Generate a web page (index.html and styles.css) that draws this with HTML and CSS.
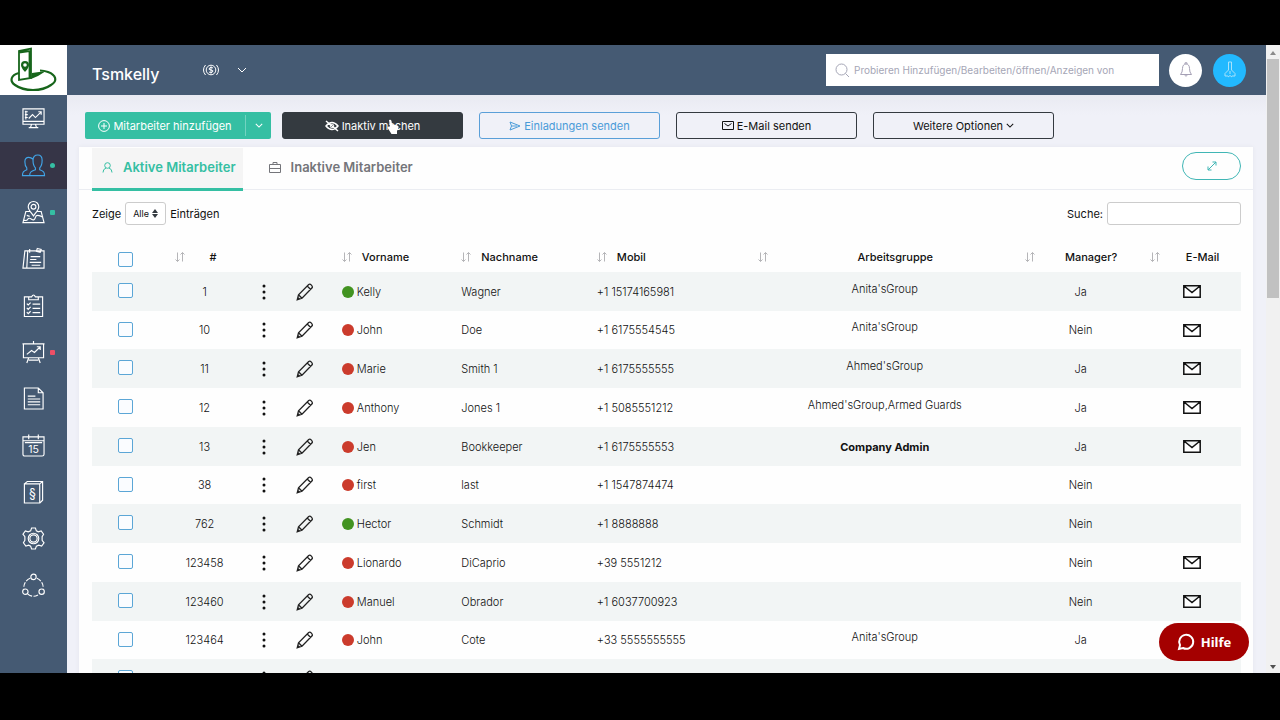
FILE: index.html
```html
<!DOCTYPE html>
<html lang="de">
<head>
<meta charset="utf-8">
<title>Tsmkelly – Mitarbeiter</title>
<link rel="stylesheet" href="styles.css">
</head>
<body>
<svg class="sprite" aria-hidden="true">
  <symbol id="sort" viewBox="0 0 10 10"><path d="M2.5 .5v9M.5 7.5l2 2 2-2M7.500 9.500v-9M5.500 2.500l2-2 2 2"/></symbol>
  <symbol id="dots" viewBox="0 0 4 16"><circle cx="2" cy="2" r="1.500"/><circle cx="2" cy="8" r="1.500"/><circle cx="2" cy="14" r="1.500"/></symbol>
  <symbol id="pencil" viewBox="0 0 18 18"><path d="M1.200 16.800l1.300-5L12.700 1.500q1.200-.9 2.700.6t.7 2.700L6 15.300zM2.500 11.800L6 15.300M11.200 3l3.500 3.500M1.500 16.500l.5-2 1.500 1.500z"/></symbol>
  <symbol id="mail" viewBox="0 0 18 13"><path d="M.8.8h16.400v11.400H.8zM1 1l8 6.500L17 1"/></symbol>
  <symbol id="chev" viewBox="0 0 10 6"><path d="M1 1l4 4 4-4"/></symbol>
</svg>
<div class="app">
  <aside class="sidebar">
    <a class="logo" href="#" aria-label="Startseite">
      <svg width="50" height="46" viewBox="0 0 50 46" fill="none" stroke="#17651b">
        <path stroke-width="2.200" d="M10 26C2 28 0 34 6 38q7 5 18 5t18-5c7-4 5-10-3-13q-4-1.500-8-1.500"/>
        <path stroke-width="1.800" d="M10 33V4l12-2.500V31zM20.500 31V4L10 5.500"/>
        <path fill="#17651b" stroke="none" d="M23 26l14-2-8 5-7 3zM16 14a4 4 0 0 1 4 4c0 3-4 7-4 7s-4-4-4-7a4 4 0 0 1 4-4z"/>
        <circle cx="16" cy="18" r="1.800" fill="#fff" stroke="none"/>
      </svg>
    </a>
    <nav class="menu">
      <a href="#" aria-label="Dashboard"><svg viewBox="0 0 24 24"><path d="M1 2h22v16H1zM1 15h22M10 18l-1 3M14 18l1 3M7 21.500h10M4 4v9M3 5h3M3 8h3M3 11h3M7 12l4-4 3 3 6-6M17 5h3v3"/></svg></a>
      <a href="#" class="current" aria-label="Mitarbeiter"><svg viewBox="0 0 24 24"><path d="M8 22.500h15.500c0-4-1-4.500-5-6v-2c2-2 2.500-5 2.500-8 0-4-2-5.500-4.500-5.500S11.500 2.500 11.500 6.500c0 3 .5 6 2.500 8v2c-4 1.500-6 2-6 6zM8 22.500H.5c0-4 1-4.500 4.500-6v-2c-2-2-2-4-2-6.500C3 5 4.500 3.500 7 3.500q2.500 0 4.500 2"/></svg><i class="dot green"></i></a>
      <a href="#" aria-label="Karte"><svg viewBox="0 0 24 24"><path d="M8 11H4L1 22.500h22L20 11h-4M12 15.500c-2-3-5.500-6-5.500-9.500a5.500 5.500 0 0 1 11 0c0 3.500-3.500 6.500-5.500 9.500zM2 20q3 1 4-1t4 0 4-2 8 0M5 15l3 1"/><circle cx="12" cy="6" r="2.500"/></svg><i class="dot green square"></i></a>
      <a href="#" aria-label="Notizen"><svg viewBox="0 0 24 24"><path d="M3 4L1 22h22V4zM6 4L5 22M8 2v4M11 4h5M16 1.500l4 1-1 3-4-1zM9 10h10M8.500 13H15M8 16h12M10 19h9"/></svg></a>
      <a href="#" aria-label="Aufgaben"><svg viewBox="0 0 24 24"><path d="M8 3H2.500v20.500h19V3H16M7 6h10V3h-3q-2-4-4 0H7zM5 10l1.500 1.500L9 9M11 10.500h8M5 14.500L6.500 16 9 13.500M11 15h8M5 19l1.500 1.500L9 18M11 19.500h8"/></svg></a>
      <a href="#" aria-label="Berichte"><svg viewBox="0 0 24 24"><path d="M.5 3h23M1.500 3v14.500h21V3M12 0v3M7 17.500L5 23M17 17.500l2 5.500M7 20h10M5 14l5-4 3 2 6-6M15.500 6H19v3.500"/></svg><i class="dot red square"></i></a>
      <a href="#" aria-label="Dokumente"><svg viewBox="0 0 24 24"><path d="M2.500 1H17l5 5v17h-19.500zM17 1v5h5M6 9.500h8M6 12.500h13M6 15.500h13M6 18.500h13"/></svg></a>
      <a href="#" aria-label="Kalender"><svg viewBox="0 0 24 24"><path d="M1 3h22v18q0 2-2 2H3q-2 0-2-2zM1 7h22M3 9h18M7 .5v5M17 .5v5"/><text x="12" y="20" text-anchor="middle">15</text></svg></a>
      <a href="#" aria-label="Richtlinien"><svg viewBox="0 0 24 24"><path d="M2.500 3h16v20h-16zM2.500 3l3-2.500h16V20l-3 3M18.500 3l3-2.500"/><text class="section" x="11" y="17.500" text-anchor="middle">§</text></svg></a>
      <a href="#" aria-label="Einstellungen"><svg viewBox="0 0 24 24"><path d="M10 1h4l1 3 2 1 3-1 2.500 3.500L21 10v4l2 2.500-2.500 3.500-3-1-2.500 1-1 3h-4l-1-3-2-1-3 1L1.500 16.500 3 14v-4L1 7.500 3.500 4l3 1L9 4z"/><circle cx="12" cy="12" r="5.500"/><circle cx="12" cy="12" r="3.800"/></svg></a>
      <a href="#" aria-label="Netzwerk"><svg viewBox="0 0 24 24"><circle cx="12" cy="3" r="2.800"/><circle cx="3.500" cy="18.500" r="2.800"/><circle cx="20.500" cy="18.500" r="2.800"/><path d="M8.500 4.500A10 10 0 0 0 2 15M15.500 4.500A10 10 0 0 1 22 15M6 21q6 4.500 12 0" stroke-dasharray="5 1.500"/></svg></a>
    </nav>
  </aside>
  <div class="page">
    <header class="topbar">
      <h1>Tsmkelly</h1>
      <button class="coin" aria-label="Währung"><svg width="16" height="14" viewBox="0 0 16 14" class="line"><circle cx="8" cy="7" r="4.800"/><path d="M2.500 2a8 8 0 0 0 0 10M13.500 2a8 8 0 0 1 0 10M10 5Q8 3.500 6.500 5T8 7t1.500 2T6 9M8 3.500v7"/></svg></button>
      <button class="plain" aria-label="Menü öffnen"><svg width="10" height="6" class="line"><use href="#chev"/></svg></button>
      <label class="search"><svg width="15" height="15" viewBox="0 0 15 15" class="line"><circle cx="6.500" cy="6.500" r="5.500"/><path d="M10.500 10.500l3.500 3.500"/></svg><input type="search" aria-label="Global suchen" placeholder="Probieren Hinzufügen/Bearbeiten/öffnen/Anzeigen von"></label>
      <button class="round bell" aria-label="Benachrichtigungen"><svg width="14" height="16" viewBox="0 0 14 16" class="line"><path d="M1.500 12.500q2-2 2-6C3.500 3.500 5 2 7 2s3.500 1.500 3.500 4.500q0 4 2 6zM6 2V.8h2V2M5.500 13q1.500 2.500 3 0"/></svg></button>
      <button class="round user" aria-label="Profil"><svg width="12" height="18" viewBox="0 0 12 18" class="line"><path d="M4.500 1v8L1 12.500V15h3M7.500 1v8l3.500 3.500V15H8M6 10v3M4 16l2-1.500L8 16M4.500 1h3"/></svg></button>
    </header>
    <main class="content">
      <div class="actions">
        <div class="split">
          <button class="add"><svg width="12" height="12" viewBox="0 0 12 12" class="line"><circle cx="6" cy="6" r="5.400"/><path d="M6 3v6M3 6h6"/></svg>Mitarbeiter hinzufügen</button>
          <button class="more" aria-label="Weitere Aktionen"><svg width="8" height="5" class="line strong" viewBox="0 0 10 6"><use href="#chev" width="10" height="6"/></svg></button>
        </div>
        <div class="buttons">
          <button class="btn dark"><svg width="14" height="12" viewBox="0 0 14 12" class="line"><path stroke-width="1.500" d="M1 6q6-7 12 0-6 7-12 0zM1 1l12 10"/><circle cx="7" cy="6" r="1.800"/></svg>Inaktiv machen
            <svg class="pointer" width="12" height="16" viewBox="0 0 12 16"><path fill="#fff" d="M2 1q2-1 2.500 1L5 5l5.500 1.500Q12 7 11.500 9L10 12v3H4.500L1 9.500Q0 8 1.500 7.500L3 8z"/></svg></button>
          <button class="btn blue"><svg width="12" height="10" viewBox="0 0 12 10" class="line"><path d="M1 1l10 4L1 9l1.500-4zM2.500 5H8"/></svg>Einladungen senden</button>
          <button class="btn"><svg width="12" height="9" viewBox="0 0 12 9" class="line"><path d="M.5.500h11v8H.5zM2.500 2.500L6 5l3.500-2.500"/></svg>E-Mail senden</button>
          <button class="btn">Weitere Optionen<svg width="8" height="5" class="line strong" viewBox="0 0 10 6"><use href="#chev" width="10" height="6"/></svg></button>
        </div>
      </div>
      <section class="card">
        <div class="tabs">
          <button class="tab active"><svg width="11" height="11" viewBox="0 0 11 11" class="line"><circle cx="5.500" cy="3.500" r="2.800"/><path d="M1 10.500Q1 7 4 6M10 10.500Q10 7 7 6"/></svg>Aktive Mitarbeiter</button>
          <button class="tab"><svg width="12" height="11" viewBox="0 0 12 11" class="line"><path d="M.5 2.500h11v8H.5zM4 2.500v-2h4v2M.5 6.500h11"/></svg>Inaktive Mitarbeiter</button>
          <button class="expand" aria-label="Vergrößern"><svg width="10" height="10" viewBox="0 0 10 10" class="line"><path d="M1 9l8-8M5.500 1H9v3.500M1 5.500V9h3.500"/></svg></button>
        </div>
        <div class="filters">
          <label for="count">Zeige</label>
          <span class="select"><select id="count"><option>Alle</option></select><svg width="6" height="9" viewBox="0 0 6 9"><path fill="#343a40" d="M0 4l3-4 3 4zM0 5l3 4 3-4z"/></svg></span>
          <span>Einträgen</span>
          <label class="find" for="find">Suche:</label><input id="find" type="text">
        </div>
        <table>
          <colgroup><col class="c-check"><col class="c-id"><col class="c-dots"><col class="c-edit"><col class="c-first"><col class="c-last"><col class="c-phone"><col class="c-group"><col class="c-mgr"><col class="c-mail"></colgroup>
          <thead><tr>
            <th><input type="checkbox" aria-label="Alle auswählen"></th>
            <th class="id"><div><svg><use href="#sort"/></svg><span>#</span></div></th><th></th><th></th>
            <th class="left"><div><svg><use href="#sort"/></svg>Vorname</div></th>
            <th class="left"><div><svg><use href="#sort"/></svg>Nachname</div></th>
            <th class="left"><div><svg><use href="#sort"/></svg>Mobil</div></th>
            <th><div><svg><use href="#sort"/></svg><span>Arbeitsgruppe</span></div></th>
            <th><div><svg><use href="#sort"/></svg><span>Manager?</span></div></th>
            <th><div><svg><use href="#sort"/></svg><span>E-Mail</span></div></th>
          </tr></thead>
          <tbody>
            <tr><td><input type="checkbox" aria-label="Kelly Wagner"></td><td>1</td><td><button aria-label="Optionen"><svg class="dots"><use href="#dots"/></svg></button></td><td><button aria-label="Bearbeiten"><svg class="pencil"><use href="#pencil"/></svg></button></td><td class="left"><i class="status on"></i>Kelly</td><td class="left">Wagner</td><td class="left">+1 15174165981</td><td class="group">Anita'sGroup</td><td>Ja</td><td><a href="#" aria-label="E-Mail"><svg class="mail"><use href="#mail"/></svg></a></td></tr>
            <tr><td><input type="checkbox" aria-label="John Doe"></td><td>10</td><td><button aria-label="Optionen"><svg class="dots"><use href="#dots"/></svg></button></td><td><button aria-label="Bearbeiten"><svg class="pencil"><use href="#pencil"/></svg></button></td><td class="left"><i class="status"></i>John</td><td class="left">Doe</td><td class="left">+1 6175554545</td><td class="group">Anita'sGroup</td><td>Nein</td><td><a href="#" aria-label="E-Mail"><svg class="mail"><use href="#mail"/></svg></a></td></tr>
            <tr><td><input type="checkbox" aria-label="Marie Smith 1"></td><td>11</td><td><button aria-label="Optionen"><svg class="dots"><use href="#dots"/></svg></button></td><td><button aria-label="Bearbeiten"><svg class="pencil"><use href="#pencil"/></svg></button></td><td class="left"><i class="status"></i>Marie</td><td class="left">Smith 1</td><td class="left">+1 6175555555</td><td class="group">Ahmed'sGroup</td><td>Ja</td><td><a href="#" aria-label="E-Mail"><svg class="mail"><use href="#mail"/></svg></a></td></tr>
            <tr><td><input type="checkbox" aria-label="Anthony Jones 1"></td><td>12</td><td><button aria-label="Optionen"><svg class="dots"><use href="#dots"/></svg></button></td><td><button aria-label="Bearbeiten"><svg class="pencil"><use href="#pencil"/></svg></button></td><td class="left"><i class="status"></i>Anthony</td><td class="left">Jones 1</td><td class="left">+1 5085551212</td><td class="group">Ahmed'sGroup,Armed Guards</td><td>Ja</td><td><a href="#" aria-label="E-Mail"><svg class="mail"><use href="#mail"/></svg></a></td></tr>
            <tr><td><input type="checkbox" aria-label="Jen Bookkeeper"></td><td>13</td><td><button aria-label="Optionen"><svg class="dots"><use href="#dots"/></svg></button></td><td><button aria-label="Bearbeiten"><svg class="pencil"><use href="#pencil"/></svg></button></td><td class="left"><i class="status"></i>Jen</td><td class="left">Bookkeeper</td><td class="left">+1 6175555553</td><td><strong>Company Admin</strong></td><td>Ja</td><td><a href="#" aria-label="E-Mail"><svg class="mail"><use href="#mail"/></svg></a></td></tr>
            <tr><td><input type="checkbox" aria-label="first last"></td><td>38</td><td><button aria-label="Optionen"><svg class="dots"><use href="#dots"/></svg></button></td><td><button aria-label="Bearbeiten"><svg class="pencil"><use href="#pencil"/></svg></button></td><td class="left"><i class="status"></i>first</td><td class="left">last</td><td class="left">+1 1547874474</td><td></td><td>Nein</td><td></td></tr>
            <tr><td><input type="checkbox" aria-label="Hector Schmidt"></td><td>762</td><td><button aria-label="Optionen"><svg class="dots"><use href="#dots"/></svg></button></td><td><button aria-label="Bearbeiten"><svg class="pencil"><use href="#pencil"/></svg></button></td><td class="left"><i class="status on"></i>Hector</td><td class="left">Schmidt</td><td class="left">+1 8888888</td><td></td><td>Nein</td><td></td></tr>
            <tr><td><input type="checkbox" aria-label="Lionardo DiCaprio"></td><td>123458</td><td><button aria-label="Optionen"><svg class="dots"><use href="#dots"/></svg></button></td><td><button aria-label="Bearbeiten"><svg class="pencil"><use href="#pencil"/></svg></button></td><td class="left"><i class="status"></i>Lionardo</td><td class="left">DiCaprio</td><td class="left">+39 5551212</td><td></td><td>Nein</td><td><a href="#" aria-label="E-Mail"><svg class="mail"><use href="#mail"/></svg></a></td></tr>
            <tr><td><input type="checkbox" aria-label="Manuel Obrador"></td><td>123460</td><td><button aria-label="Optionen"><svg class="dots"><use href="#dots"/></svg></button></td><td><button aria-label="Bearbeiten"><svg class="pencil"><use href="#pencil"/></svg></button></td><td class="left"><i class="status"></i>Manuel</td><td class="left">Obrador</td><td class="left">+1 6037700923</td><td></td><td>Nein</td><td><a href="#" aria-label="E-Mail"><svg class="mail"><use href="#mail"/></svg></a></td></tr>
            <tr><td><input type="checkbox" aria-label="John Cote"></td><td>123464</td><td><button aria-label="Optionen"><svg class="dots"><use href="#dots"/></svg></button></td><td><button aria-label="Bearbeiten"><svg class="pencil"><use href="#pencil"/></svg></button></td><td class="left"><i class="status"></i>John</td><td class="left">Cote</td><td class="left">+33 5555555555</td><td class="group">Anita'sGroup</td><td>Ja</td><td></td></tr>
            <tr><td><input type="checkbox" aria-label="Auswählen"></td><td></td><td><button aria-label="Optionen"><svg class="dots"><use href="#dots"/></svg></button></td><td><button aria-label="Bearbeiten"><svg class="pencil"><use href="#pencil"/></svg></button></td><td></td><td></td><td></td><td></td><td></td><td></td></tr>
          </tbody>
        </table>
      </section>
    </main>
  </div>
  <div class="scrollbar"><svg width="6" height="4" viewBox="0 0 6 4"><path fill="#8b8b8b" d="M0 4l3-4 3 4z"/></svg><span class="thumb"></span><svg class="down" width="6" height="4" viewBox="0 0 6 4"><path fill="#505050" d="M0 0l3 4 3-4z"/></svg></div>
  <button class="help"><svg width="18" height="18" viewBox="0 0 18 18"><path fill="none" stroke="#fff" stroke-width="2" d="M2 16l1-4a7 7 0 1 1 3 3z"/></svg>Hilfe</button>
</div>
</body>
</html>
```
FILE: styles.css
```css
* { box-sizing: border-box; }
body {
  margin: 0;
  height: 100vh;
  padding: 45px 0 47px;
  background: #000;
  color: #111;
  font: 11px/16px Inter, "Open Sans", sans-serif;
  overflow: hidden;
}
button, input, select { font: inherit; color: inherit; }
button { border: 0; padding: 0; background: none; cursor: pointer; }
svg { flex: none; display: block; }
.sprite { position: absolute; width: 0; height: 0; }
.line { fill: none; stroke: currentColor; stroke-width: 1; }
.line.strong { stroke-width: 1.3; }

.app { position: relative; display: flex; height: 100%; overflow: hidden; background: #f0f1f8; }
.sidebar { flex: none; width: 67px; background: #455a73; }
.logo { display: grid; place-items: center; height: 50px; background: #fff; }
.menu a { position: relative; display: grid; place-items: center; height: 47px; color: #fff; }
.menu a:nth-child(3n) { height: 46px; }
.menu .current { background: #363547; color: #41a5e8; }
.menu svg { width: 23px; height: 23px; fill: none; stroke: currentColor; stroke-width: 1.2; overflow: visible; }
.menu text { font-size: 11px; fill: currentColor; stroke: none; }
.menu .section { font-size: 13px; }
.dot { position: absolute; right: 12px; width: 5px; height: 5px; border-radius: 50%; }
.dot.square { border-radius: 1px; }
.green { background: #35bfa3; }
.red { background: #ee4f66; }

.page { flex: 1; min-width: 0; }
.topbar { display: flex; align-items: center; height: 50px; padding: 0 20px 0 25px; background: #455a73; color: #fff; }
h1 { margin: 8px 44px 0 0; font-size: 16px; line-height: 20px; font-weight: 500; }
.coin { margin-right: 18px; }
.search { display: flex; align-items: center; gap: 4px; width: 333px; height: 32px; margin-left: auto; padding: 0 9px; background: #fff; color: #a5a6b6; }
.search input { flex: 1; min-width: 0; border: 0; padding: 0; outline: 0; background: none; font-size: 10px; }
.search input::placeholder { color: #a5a6b6; opacity: 1; }
.round { display: grid; place-items: center; width: 33px; height: 33px; border-radius: 50%; margin-left: 10px; }
.bell { background: #fff; color: #a5a0b5; }
.user { background: #22b9ff; color: #a8e2fa; margin-left: 11px; }

.content { padding: 17px 13px 0 12px; background: linear-gradient(#e9eaf2, #f0f1f8 20px); }
.actions { display: flex; gap: 11px; margin: 0 0 8px 6px; font-size: 11px; }
.actions button { display: flex; align-items: center; justify-content: center; gap: 3px; }
.split { display: flex; width: 186px; height: 27px; border-radius: 2px; background: #35bfa3; color: #fff; }
.split .add { flex: 1; }
.split .more { width: 26px; margin: 3px 0; border-left: 1px solid #72d3c0; }
.buttons { display: flex; gap: 16px; }
.btn { position: relative; width: 181px; height: 27px; border: 1px solid #343a40; border-radius: 3px; }
.btn.dark { background: #343a40; color: #fff; }
.btn.blue { border-color: #5a9fd8; color: #4a9bd8; }
.pointer { position: absolute; left: 104px; top: 6px; }

.card { padding: 0 12px 0 13px; background: #fefefe; box-shadow: 0 0 4px #e4e5ed; }
.tabs { display: flex; align-items: flex-start; height: 43px; margin: 0 -12px 0 -13px; padding: 1px 12px 0 13px; border-bottom: 1px solid #ebedf2; }
.tab { display: flex; align-items: center; gap: 10px; height: 38px; padding: 0 7px 0 10px; color: #74757a; font-size: 13px; font-weight: 600; }
.tab + .tab { margin-left: 16px; }
.tab.active { height: 43px; padding-bottom: 2px; background: #f5f5f5; border-bottom: 3px solid #35bfa3; color: #35bfa3; }
.expand { display: grid; place-items: center; width: 59px; height: 28px; margin: 4px 0 0 auto; border: 1px solid #40b6b5; border-radius: 14px; color: #40b6b5; }
.filters { display: flex; align-items: center; gap: 4px; padding: 12px 0 17px; }
.select { position: relative; width: 41px; }
.select select { appearance: none; width: 100%; height: 23px; padding: 0 7px; border: 1px solid #ccc; border-radius: 3px; background: #fff; font-size: 9px; }
.select svg { position: absolute; right: 8px; top: 7px; }
.find { margin-left: auto; }
#find { width: 134px; height: 23px; border: 1px solid #ccc; border-radius: 3px; background: #fff; }

table { width: 100%; table-layout: fixed; border-collapse: collapse; }
.c-check { width: 5.9%; } .c-id { width: 7.8%; } .c-dots { width: 2.6%; } .c-edit { width: 4.4%; } .c-first { width: 10.4%; }
.c-last { width: 11.8%; } .c-phone { width: 14.5%; } .c-group { width: 23.2%; } .c-mgr { width: 10.9%; } .c-mail { width: 8.5%; }
th { height: 30px; padding: 0 4px 0 7px; font-weight: 500; }
th.id { padding: 0 16px 0 15px; }
th div { display: flex; align-items: center; gap: 8px; }
th svg { width: 10px; height: 10px; fill: none; stroke: #b5b5b8; }
th span { flex: 1; }
th.left, td.left { padding-left: 12px; text-align: left; }
th.left div { gap: 10px; }
td { height: 39px; padding: 0; text-align: center; vertical-align: middle; font-weight: 300; white-space: nowrap; }
tr:nth-child(4n + 2) td { height: 38px; }
th:first-child { padding: 4px 0 0; }
td:first-child { padding: 0 0 2px; }
tbody tr:nth-child(odd) { background: #f2f5f5; }
td.group { padding-bottom: 6px; }
td strong { font-weight: 700; }
input[type="checkbox"] { appearance: none; display: block; width: 15px; height: 15px; margin: 0 auto; border: 1px solid #5ba6d6; border-radius: 2px; background: #fafcff; }
td svg { margin: 0 auto; }
td button, td a { display: block; margin: 0 auto; width: fit-content; color: #111; }
.dots { width: 4px; height: 16px; fill: #111; }
.pencil { width: 18px; height: 18px; fill: none; stroke: #222; stroke-width: 1.3; }
.mail { width: 18px; height: 13px; fill: #fff; stroke: #111; stroke-width: 1.5; }
.status { display: inline-block; width: 12px; height: 12px; margin-right: 3px; border-radius: 50%; background: #cb3b2c; vertical-align: -2px; }
.status.on { background: #429321; }

.scrollbar { flex: none; display: flex; flex-direction: column; align-items: center; width: 14px; padding: 6px 0 4px; background: #f1f1f1; }
.thumb { width: 12px; height: 239px; margin-top: 4px; background: #c1c1c1; }
.down { margin-top: auto; }
.help { position: absolute; right: 31px; bottom: 12px; display: flex; align-items: center; justify-content: center; gap: 6px; width: 90px; height: 38px; border-radius: 19px; background: #a40000; color: #fff; font: 700 13px/18px "Noto Sans", sans-serif; }
```
